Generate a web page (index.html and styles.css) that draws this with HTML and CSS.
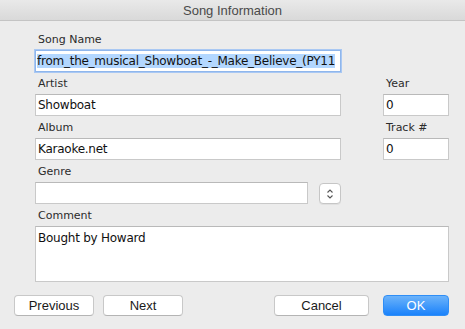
FILE: index.html
```html
<!DOCTYPE html>
<html lang="en">
  <head>
    <meta charset="UTF-8" />
    <meta name="viewport" content="width=device-width, initial-scale=1.0" />
    <title>Song Information</title>
    <link rel="stylesheet" href="styles.css">
  </head>
  <body>
    <!-- Song info dialog -->
    <div class="titlebar">Song Information</div>
    <main class="dialog">
      <div class="grid">
        <label class="label">Song Name</label>
        <div></div>
        <div class="field focused"><span class="selected">from_the_musical_Showboat_-_Make_Believe_(PY11</span></div>
        <div></div>

        <label class="label">Artist</label>
        <label class="label">Year</label>
        <div class="field">Showboat</div>
        <div class="field">0</div>

        <label class="label">Album</label>
        <label class="label">Track #</label>
        <div class="field">Karaoke.net</div>
        <div class="field">0</div>

        <label class="label">Genre</label>
        <div></div>
        <div class="genre-row">
          <div class="field genre"></div>
          <div class="stepper">
            <svg width="10" height="14" viewBox="0 0 10 14">
              <path d="M2.5 5.5 L5 3 L7.5 5.5" fill="none" stroke="#555" stroke-width="1.1" />
              <path d="M2.5 8.5 L5 11 L7.5 8.5" fill="none" stroke="#555" stroke-width="1.1" />
            </svg>
          </div>
        </div>
        <div></div>

        <label class="label wide">Comment</label>
        <div class="field comment">Bought by Howard</div>
      </div>

      <div class="buttons">
        <button class="btn prev">Previous</button>
        <button class="btn next">Next</button>
        <div class="spacer"></div>
        <button class="btn cancel">Cancel</button>
        <button class="btn ok">OK</button>
      </div>
    </main>
  </body>
</html>
```

FILE: styles.css
```css
html,
body {
  margin: 0;
  height: 100%;
}
body {
  background-color: #ececec;
  font-family: "Liberation Sans", Arial, sans-serif;
  color: #222;
}
.titlebar {
  height: 20px;
  line-height: 21px;
  text-align: center;
  font-size: 13px;
  color: #4a4a4a;
  background: linear-gradient(#e9e9e9, #d9d9d9);
  border-bottom: 1px solid #c4c4c4;
}
.dialog {
  padding: 11px 16px 0 14px;
}
.grid {
  display: grid;
  grid-template-columns: 306px 66px;
  column-gap: 42px;
  margin-left: 21px;
}
.label {
  display: block;
  box-sizing: border-box;
  height: 14px;
  line-height: 14px;
  padding-top: 1px;
  font-family: "DejaVu Sans", "Liberation Sans", sans-serif;
  font-size: 11px;
  padding-left: 3px;
  margin-bottom: 4px;
  color: #2b2b2b;
}
.wide {
  grid-column: 1 / 3;
}
.field {
  box-sizing: border-box;
  height: 22px;
  line-height: 20px;
  border: 1px solid #c9c9c9;
  border-top-color: #b9b9b9;
  background: #fff;
  font-family: "DejaVu Sans", "Liberation Sans", sans-serif;
  font-size: 12px;
  letter-spacing: -0.25px;
  padding-left: 2px;
  margin-bottom: 4px;
  white-space: nowrap;
  overflow: hidden;
  color: #111;
}
.focused {
  border-color: #8fb6ec;
  box-shadow: 0 0 0 1px #a9c8f3;
  padding-left: 1px;
}
.selected {
  background: #b3d7ff;
}
.genre-row {
  display: flex;
  column-gap: 11px;
}
.genre {
  width: 273px;
}
.stepper {
  box-sizing: border-box;
  width: 22px;
  height: 21px;
  margin-top: 1px;
  border: 1px solid #c6c6c6;
  border-radius: 4px;
  background: #fff;
  display: flex;
  align-items: center;
  justify-content: center;
  box-shadow: 0 1px 0 rgba(0, 0, 0, 0.05);
}
.comment {
  grid-column: 1 / 3;
  height: 56px;
  line-height: 22px;
  margin-bottom: 0;
}
.buttons {
  display: flex;
  column-gap: 9px;
  margin-top: 13px;
}
.spacer {
  flex: 1;
}
.btn {
  box-sizing: border-box;
  height: 21px;
  padding: 0;
  border: 1px solid #c8c8c8;
  border-bottom-color: #b4b4b4;
  border-radius: 4px;
  background: #fff;
  font-family: "Liberation Sans", Arial, sans-serif;
  font-size: 13px;
  color: #1a1a1a;
}
.prev,
.next {
  width: 80px;
}
.cancel {
  width: 95px;
  margin-right: 5px;
}
.ok {
  width: 66px;
  border: 1px solid #2f8ef6;
  background: linear-gradient(#6cb3fa, #1a82fb);
  color: #fff;
}
```
